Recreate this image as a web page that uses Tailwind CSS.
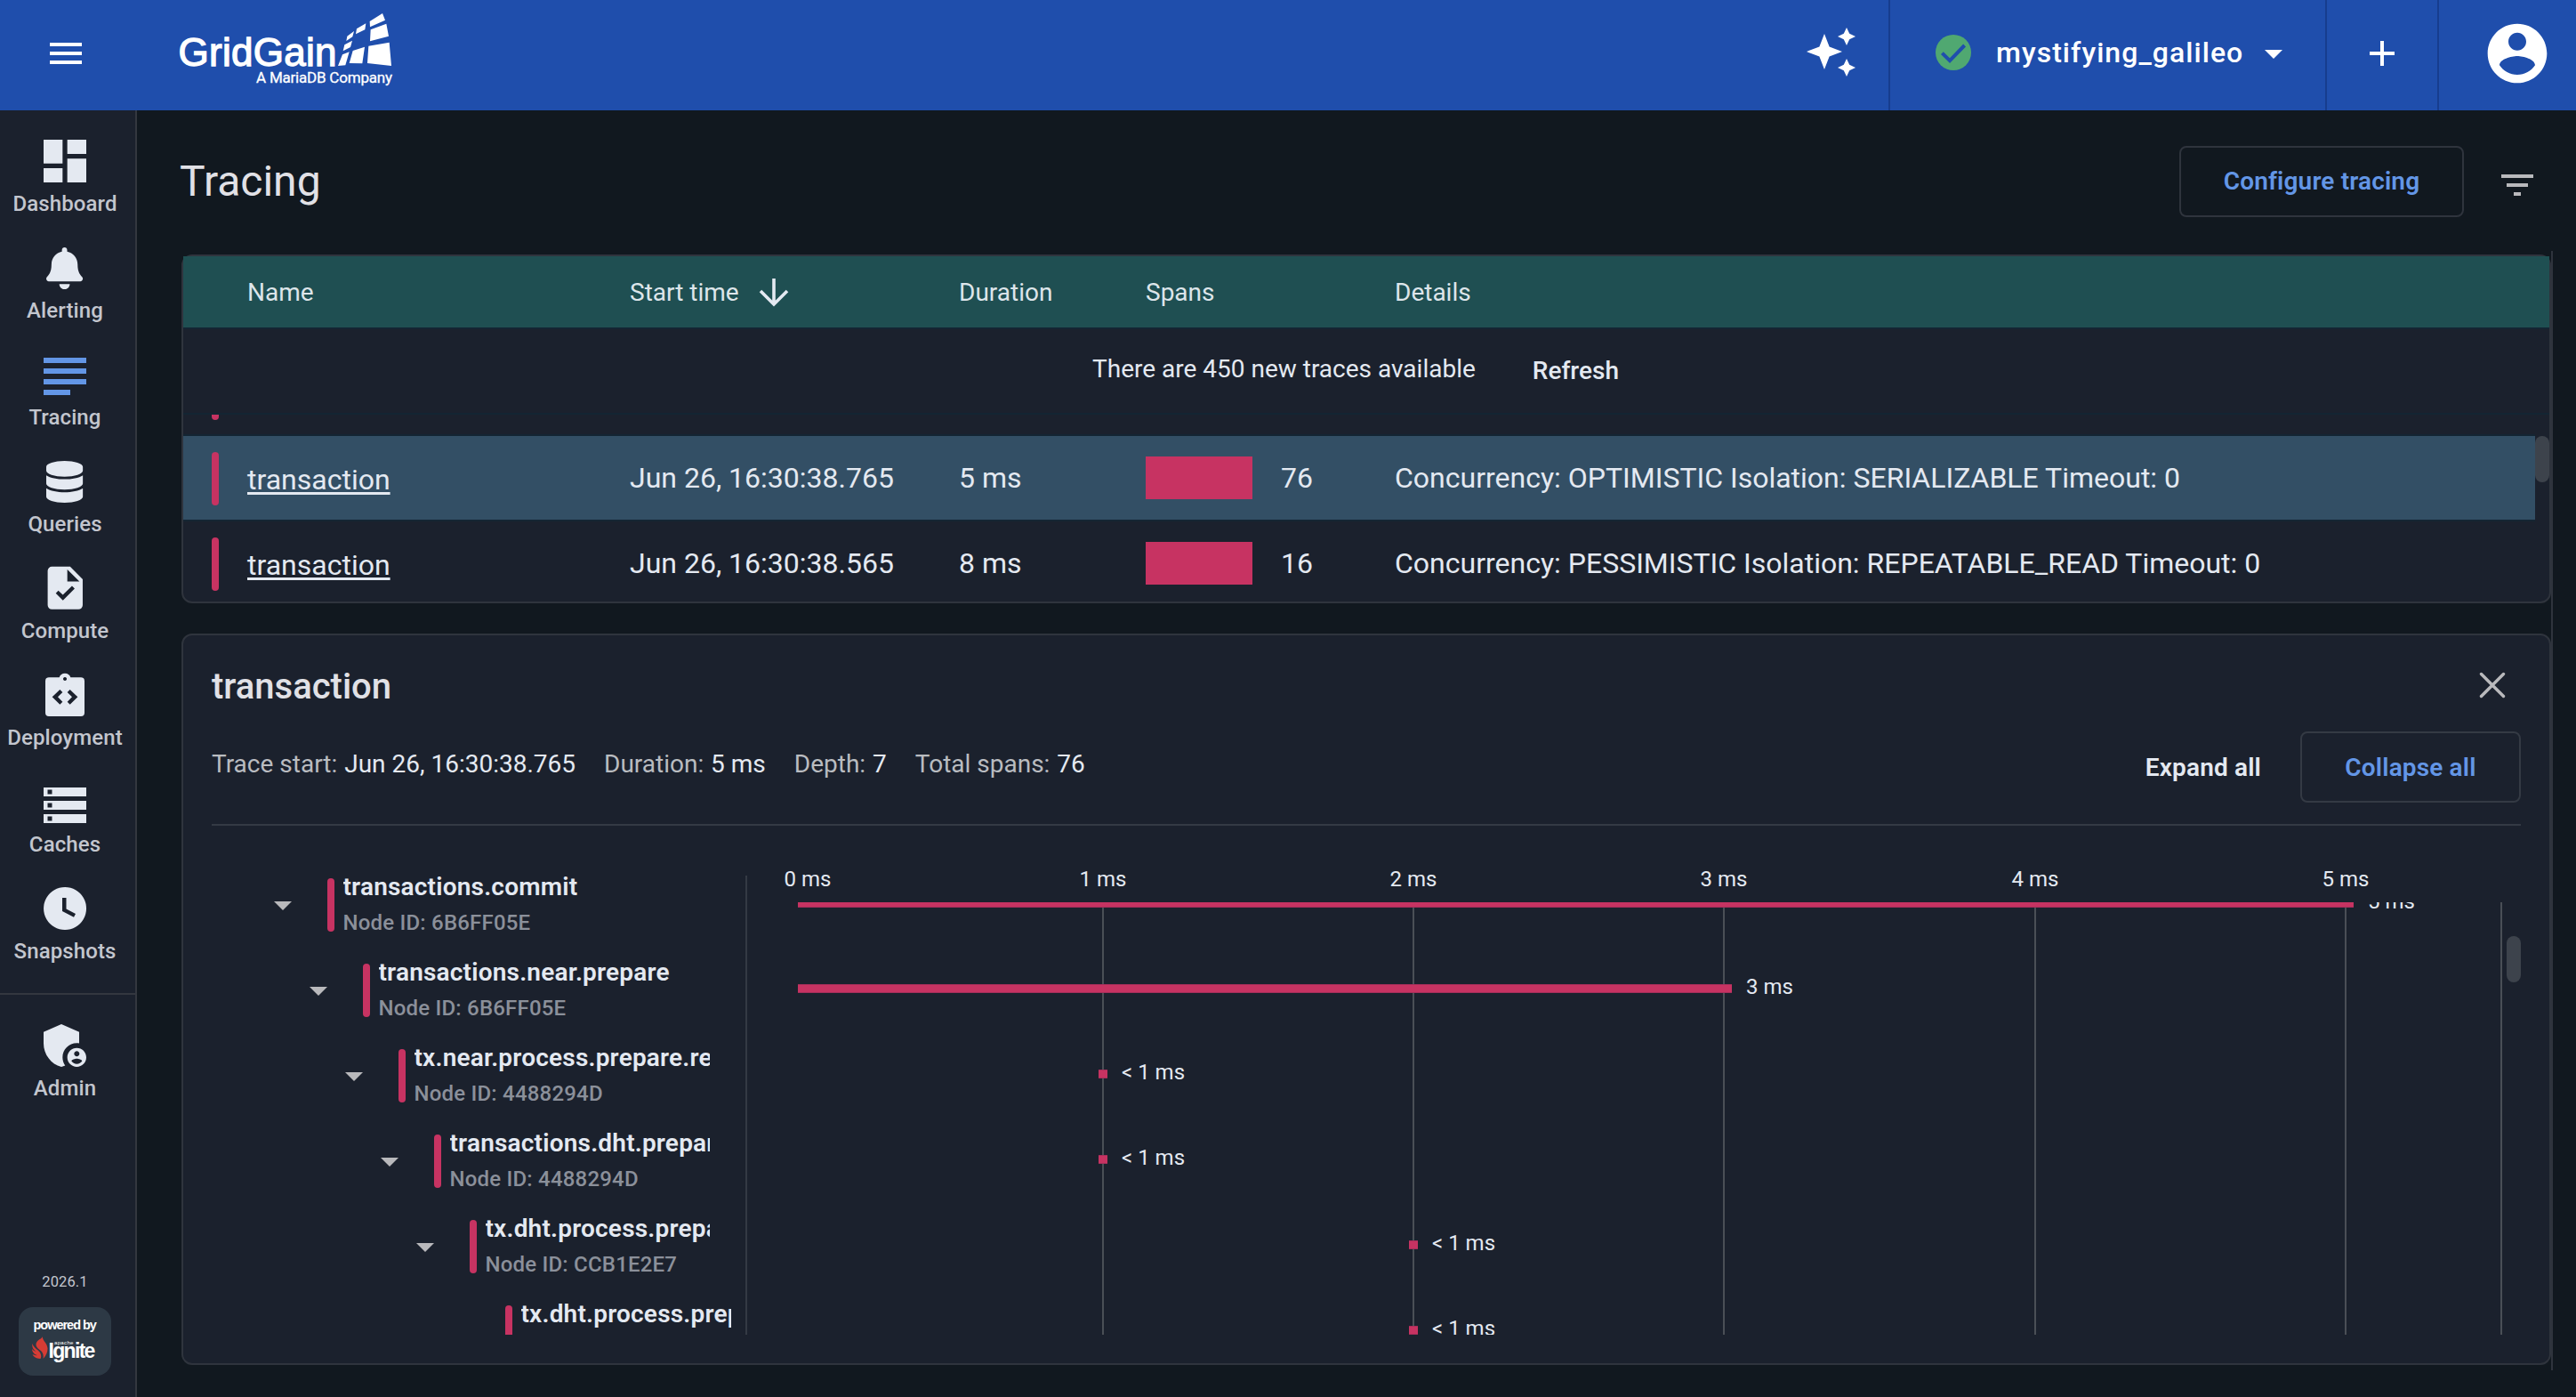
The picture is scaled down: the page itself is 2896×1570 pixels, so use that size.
<!DOCTYPE html>
<html lang="en">
<head>
    <meta charset="UTF-8">
    <meta name="viewport" content="width=device-width, initial-scale=1.0">
    <title>Tracing</title>
    <script src="https://cdn.jsdelivr.net/npm/@tailwindcss/browser@4"></script>
</head>
<body class="w-[2896px] h-[1570px] overflow-hidden flex flex-col bg-[#11181f] text-[#e4e9f1] font-['Roboto',sans-serif]">
    <!-- top bar -->
    <header class="h-[124px] shrink-0 flex items-stretch bg-[#1f4eac] text-white">
        <button class="pl-[50px] pb-1 flex items-center">
            <svg class="size-12" viewBox="0 0 24 24" fill="currentColor"><path d="M3 6h18v2H3zM3 11h18v2H3zM3 16h18v2H3z"/></svg>
        </button>
        <div class="ml-[102px] w-[244px]">
            <svg class="w-[244px] h-[124px]" viewBox="200 0 244 124" fill="#fff">
                <text x="200.5" y="74" font-family="Liberation Sans" font-size="44" textLength="178" stroke="#fff" stroke-width="1.3">GridGain</text>
                <text x="288" y="93" font-family="Roboto" font-size="17" textLength="153" stroke="#fff" stroke-width=".3">A MariaDB Company</text>
                <g transform="scale(.33333)">
                    <path d="M1247 72l43-27 9 23-51 23zM1250 100l53-20 8 42-63 17zM1243 155l70-12 7 79-81-9z"/>
                    <path d="M1203 97l31-18-3 21-31 15zM1190 171l40-13-8 56-44-1z"/>
                    <path d="M1171 122l23-17-5 19-21 14zM1162 151l26-14-6 22-25 13zM1155 184l23-9-13 45-25 2z"/>
                </g>
            </svg>
        </div>
        <div class="ml-auto w-[99px] flex items-center pl-[6px] pb-2">
            <svg class="size-16" viewBox="0 0 64 64" fill="currentColor">
                <path d="M21 12l5.600 14.400L41 32l-14.400 5.600L21 52l-5.600-14.400L1 32l14.400-5.600z"/>
                <path d="M46 5l3.200 6.800L56 15l-6.800 3.200L46 25l-3.200-6.800L36 15l6.800-3.200zM46 40l3.200 6.800L56 50l-6.800 3.200L46 60l-3.200-6.800L36 50l6.800-3.200z"/>
            </svg>
        </div>
        <div class="w-[491px] border-l-2 border-[#173d8e] pl-[47px] pb-1 flex items-center">
            <svg class="size-12 -mt-0.5" viewBox="0 0 24 24"><circle cx="12" cy="12" r="10" fill="#50a871"/><path d="M5.700 12.300l4.300 4.300L18.300 8" fill="none" stroke="#1f4eac" stroke-width="2"/></svg>
            <span class="ml-6 -mt-0.5 text-[32px] font-medium tracking-[1.05px]">mystifying_galileo</span>
            <svg class="size-12 ml-[10px]" viewBox="0 0 24 24" fill="currentColor"><path d="M7 10l5 5 5-5z"/></svg>
        </div>
        <div class="w-[126px] border-l-2 border-[#173d8e] pb-1 flex items-center justify-center">
            <svg class="size-12" viewBox="0 0 24 24" fill="currentColor"><path d="M19 13h-6v6h-2v-6H5v-2h6V5h2v6h6z"/></svg>
        </div>
        <div class="w-[156px] border-l-2 border-[#173d8e] pl-12 pb-1 flex items-center">
            <svg class="size-20" viewBox="0 0 24 24" fill="currentColor"><path d="M12 2C6.480 2 2 6.480 2 12s4.480 10 10 10 10-4.480 10-10S17.520 2 12 2zm0 3c1.660 0 3 1.340 3 3s-1.340 3-3 3-3-1.340-3-3 1.340-3 3-3zm0 14.200c-2.500 0-4.710-1.280-6-3.220.03-1.990 4-3.080 6-3.080 1.990 0 5.970 1.090 6 3.080-1.290 1.940-3.500 3.220-6 3.220z"/></svg>
        </div>
    </header>

    <div class="flex flex-1 min-h-0">
        <!-- side navigation -->
        <aside class="w-[154px] shrink-0 flex flex-col bg-[#1b212d] border-r-2 border-[#33373f] pr-[6px] text-[24px] font-medium tracking-[0.1px] text-[#c3c6ce]">
            <nav class="flex flex-col pt-[25px]">
                <a class="h-30 flex flex-col items-center">
                    <svg class="w-16 h-16" viewBox="0 0 24 24" fill="#e4e9f1"><path d="M3 13h8V3H3v10zm0 8h8v-6H3v6zm10 0h8V11h-8v10zm0-18v6h8V3h-8z"/></svg>
                    <span class="leading-8">Dashboard</span>
                </a>
                <a class="h-30 flex flex-col items-center">
                    <span class="h-16 flex items-center"><svg class="h-[47px]" viewBox="0 0 448 512" fill="#e4e9f1"><path d="M224 512c35.320 0 63.970-28.650 63.970-64H160.030c0 35.350 28.650 64 63.970 64zm215.390-149.710c-19.320-20.760-55.470-51.990-55.470-154.290 0-77.700-54.480-139.900-127.940-155.160V32c0-17.670-14.320-32-31.980-32s-31.980 14.330-31.980 32v20.840C118.560 68.100 64.080 130.300 64.080 208c0 102.300-36.150 133.530-55.470 154.290-6 6.450-8.660 14.160-8.610 21.710.11 16.400 12.980 32 32.100 32h383.800c19.120 0 32-15.600 32.100-32 .05-7.550-2.610-15.270-8.610-21.710z"/></svg></span>
                    <span class="leading-8">Alerting</span>
                </a>
                <a class="h-30 flex flex-col items-center">
                    <svg class="w-16 h-16" viewBox="0 0 64 64" fill="#6396e6"><path d="M8 13h48v6H8zM8 25h48v6H8zM8 37h48v6H8zM8 49h30v6H8z"/></svg>
                    <span class="leading-8">Tracing</span>
                </a>
                <a class="h-30 flex flex-col items-center">
                    <span class="h-16 flex items-center"><svg class="h-[47px]" viewBox="0 0 448 512" fill="#e4e9f1"><path d="M448 73.143v45.714C448 159.143 347.667 192 224 192S0 159.143 0 118.857V73.143C0 32.857 100.333 0 224 0s224 32.857 224 73.143zM448 176v102.857C448 319.143 347.667 352 224 352S0 319.143 0 278.857V176c48.125 33.143 136.208 48.572 224 48.572S399.874 209.143 448 176zm0 160v102.857C448 479.143 347.667 512 224 512S0 479.143 0 438.857V336c48.125 33.143 136.208 48.572 224 48.572S399.874 369.143 448 336z"/></svg></span>
                    <span class="leading-8">Queries</span>
                </a>
                <a class="h-30 flex flex-col items-center">
                    <span class="h-16 flex items-center"><svg class="size-[57.6px]" viewBox="0 0 24 24" fill="#e4e9f1" fill-rule="evenodd"><path d="M14.500 2H6a2 2 0 0 0-2 2v16a2 2 0 0 0 2 2h12.400a2 2 0 0 0 2-2V7.900zM13.200 9V3.300L18.900 9zM7.800 14.500L9 13.250l2.100 2L15.400 11l1.250 1.300-5.500 5.500z"/></svg></span>
                    <span class="leading-8">Compute</span>
                </a>
                <a class="h-30 flex flex-col items-center">
                    <svg class="w-16 h-16" viewBox="123 27 192 192" fill="#e4e9f1" fill-rule="evenodd"><path d="M165 64h35a20 20 0 0 1 38 0h35q12 0 12 12v107q0 12-12 12H165q-12 0-12-12V76q0-12 12-12zM219 63a6 6 0 1 0 .1 0zM176 130l26-25 9 9-16 16 16 16-9 9zM262 130l-26-25-9 9 16 16-16 16 9 9z"/></svg>
                    <span class="leading-8">Deployment</span>
                </a>
                <a class="h-30 flex flex-col items-center">
                    <svg class="w-16 h-16" viewBox="0 0 64 64" fill="#e4e9f1" fill-rule="evenodd"><path d="M8 16h48v10H8zM12.500 18.500v5h5v-5zM8 31h48v10H8zM12.500 33.500v5h5v-5zM8 46h48v10H8zM12.500 48.500v5h5v-5z"/></svg>
                    <span class="leading-8">Caches</span>
                </a>
                <a class="h-30 flex flex-col items-center">
                    <svg class="w-16 h-16" viewBox="0 0 64 64" fill="#e4e9f1" fill-rule="evenodd"><path d="M32 8a24 24 0 1 0 .1 0zM29 20h4.500v12.500L44 38l-2 3.800L29 35z"/></svg>
                    <span class="leading-8">Snapshots</span>
                </a>
            </nav>
            <div class="h-0.5 w-[152px] mt-[7px] bg-[#33373f]"></div>
            <a class="mt-[25px] flex flex-col items-center">
                <svg class="w-16 h-16" viewBox="0 0 24 24" fill="#e4e9f1"><path d="M17 11c.34 0 .67.04 1 .09V6.270L10.500 3 3 6.270v4.910c0 4.540 3.200 8.790 7.500 9.820.55-.13 1.080-.32 1.600-.55-.69-.98-1.100-2.170-1.100-3.450 0-3.310 2.690-6 6-6z"/><path d="M17 13c-2.210 0-4 1.790-4 4s1.790 4 4 4 4-1.790 4-4-1.790-4-4-4zm0 1.380c.62 0 1.120.51 1.120 1.120s-.51 1.120-1.120 1.120-1.120-.51-1.120-1.120.5-1.120 1.120-1.120zm0 5.370c-.93 0-1.740-.46-2.240-1.170.05-.72 1.510-1.080 2.240-1.080s2.190.36 2.240 1.080c-.5.71-1.310 1.170-2.240 1.170z"/></svg>
                <span class="leading-8">Admin</span>
            </a>
            <div class="mt-auto mb-6 flex flex-col items-center">
                <span class="text-[16.5px] leading-5 font-normal">2026.1</span>
                <div class="mt-[18px] -ml-px w-[104px] h-[77px] rounded-2xl bg-[#2d3945]">
                    <svg class="w-[104px] h-[77px]" viewBox="21 1469 104 77" fill="#fff">
                        <text x="37.500" y="1494" font-family="Liberation Sans" font-size="14.500" font-weight="700" textLength="71.500">powered by</text>
                        <path fill="#d63c35" d="M48 1502c-1 4 5 7 5.500 13 .3 5-2 9-5 12 1-5-1-8-4-10-4-3-5-6-3-9 2-3 5-3 6.500-6zM36.500 1510c1 5 6 6 8.500 10 1.500 3 1.500 5 .5 7-4 0-8-2-9-5 2 1 4 1.500 5 1-3-1-5.500-4-5.500-7 1.500 2 3 2.500 4.500 3-3-2-5-5-4-9z"/>
                        <text x="61" y="1510.500" font-family="Liberation Sans" font-size="6" textLength="21.500">apache</text>
                        <text x="54.500" y="1526" font-family="Liberation Sans" font-size="23" font-weight="700" textLength="53">Ignite</text>
                    </svg>
                </div>
            </div>
        </aside>

        <main class="flex-1 flex flex-col pl-12">
            <div class="mt-10 h-20 pr-[42px] flex items-center">
                <h1 class="text-[48px] leading-[56px] text-[#e1e1e6]">Tracing</h1>
                <button class="ml-auto h-20 w-[320px] border-2 border-[#2f343d] rounded-lg text-[28px] font-semibold tracking-[0.15px] text-[#6396e6]">Configure tracing</button>
                <svg class="size-12 ml-9 mt-2" viewBox="0 0 24 24" fill="#b9b9bc"><path d="M10 18h4v-2h-4v2zM3 6v2h18V6H3zm3 7h12v-2H6v2z"/></svg>
            </div>

            <div class="ml-0.5 mr-[26px] mt-[38px] h-[1258px] pt-1 border-r-2 border-[#2f343d] flex flex-col gap-[34px]">
                <!-- trace list -->
                <section class="h-[392px] border-2 border-[#2f343d] rounded-xl bg-[#1b212d]">
                    <div class="h-[82px] pt-0.5 border-b-2 border-[#142533] bg-[#1f4f52] grid grid-cols-[71px_431px_370px_210px_280px_1fr] items-center text-[28px] text-[#dde5ea]">
                        <span></span>
                        <span class="pl-px">Name</span>
                        <span class="flex items-center gap-[17px]">Start time
                            <svg class="size-[44px]" viewBox="0 0 44 44" fill="none" stroke="#e4e9f1" stroke-width="3.600"><path d="M22 6v29M7 20l15 15 15-15"/></svg>
                        </span>
                        <span>Duration</span>
                        <span>Spans</span>
                        <span>Details</span>
                    </div>
                    <div class="h-24 border-b-2 border-[#142533] flex items-center justify-center text-[28px]">
                        <span class="pb-[5px]">There are 450 new traces available</span>
                        <button class="ml-10 px-6 font-medium">Refresh</button>
                    </div>
                    <div class="relative h-[210px] overflow-hidden rounded-b-[10px] pr-4 text-[32px]">
                        <div class="h-6 border-b-2 border-[#142533] pl-8">
                            <div class="w-2 h-1.5 rounded-b bg-[#c73362]"></div>
                        </div>
                        <div class="h-24 border-b-2 border-[#142533] bg-[#334f65] grid grid-cols-[71px_431px_370px_210px_280px_1fr] items-center">
                            <span class="ml-8 mt-0.5 w-2 h-15 rounded bg-[#c73362]"></span>
                            <a class="pl-px pt-1 underline underline-offset-[3px] decoration-[3px] [text-decoration-skip-ink:none]">transaction</a>
                            <span>Jun 26, 16:30:38.765</span>
                            <span>5 ms</span>
                            <span class="flex items-center gap-8"><i class="w-30 h-12 bg-[#c73362]"></i>76</span>
                            <span>Concurrency: OPTIMISTIC Isolation: SERIALIZABLE Timeout: 0</span>
                        </div>
                        <div class="h-24 grid grid-cols-[71px_431px_370px_210px_280px_1fr] items-center pb-0.5">
                            <span class="ml-8 mt-0.5 w-2 h-15 rounded bg-[#c73362]"></span>
                            <a class="pl-px pt-1 underline underline-offset-[3px] decoration-[3px] [text-decoration-skip-ink:none]">transaction</a>
                            <span>Jun 26, 16:30:38.565</span>
                            <span>8 ms</span>
                            <span class="flex items-center gap-8"><i class="w-30 h-12 bg-[#c73362]"></i>16</span>
                            <span>Concurrency: PESSIMISTIC Isolation: REPEATABLE_READ Timeout: 0</span>
                        </div>
                        <div class="absolute right-0 top-6 w-4 h-[52px] rounded-full bg-[#3d434c]"></div>
                    </div>
                </section>

                <!-- selected trace -->
                <section class="h-[822px] border-2 border-[#2f343d] rounded-xl bg-[#1b212d] px-8 pt-8 flex flex-col">
                    <div class="h-12 flex items-center justify-between">
                        <h2 class="pt-[3px] text-[40px] leading-[48px] font-medium text-[#e1e1e6]">transaction</h2>
                        <svg class="size-12 mr-2" viewBox="0 0 48 48" fill="none" stroke="#b9b9bc" stroke-width="3.400" stroke-linecap="round"><path d="M11.500 11.500l25 25M36.500 11.500l-25 25"/></svg>
                    </div>
                    <div class="mt-7 h-20 flex items-center">
                        <div class="pb-[7px] flex gap-8 text-[28px] text-[#b9bcc0]">
                            <span>Trace start: <b class="ml-px font-normal text-[#e4e9f1]">Jun 26, 16:30:38.765</b></span>
                            <span>Duration: <b class="ml-px font-normal text-[#e4e9f1]">5 ms</b></span>
                            <span>Depth: <b class="ml-px font-normal text-[#e4e9f1]">7</b></span>
                            <span>Total spans: <b class="ml-px font-normal text-[#e4e9f1]">76</b></span>
                        </div>
                        <button class="ml-auto pt-px text-[28px] font-semibold tracking-[0.15px]">Expand all</button>
                        <button class="ml-11 h-20 w-[248px] pt-px border-2 border-[#343a44] rounded-lg text-[28px] font-semibold tracking-[0.15px] text-[#6396e6]">Collapse all</button>
                    </div>
                    <div class="mt-6 h-0.5 shrink-0 bg-[#343a44]"></div>

                    <div class="flex h-[572px]">
                        <!-- span tree -->
                        <div id="tree" class="w-[602px] mt-14 h-[516px] shrink-0 overflow-hidden border-r-2 border-[#343a44]"></div>
                        <!-- timeline -->
                        <div class="flex-1">
                            <div id="axis" class="relative h-[86px] text-[24px] leading-6"></div>
                            <div class="relative h-[486px] overflow-hidden">
                                <div id="lines"></div>
                                <div id="bars" class="relative -mt-[47px] text-[24px]"></div>
                                <div class="absolute right-0 top-[38px] w-4 h-[52px] rounded-full bg-[#3d434c]"></div>
                            </div>
                        </div>
                    </div>
                </section>
            </div>
        </main>
    </div>

    <script>
        // left / width are px inside the timeline
        const spans = [
            { name: 'transactions.commit', node: '6B6FF05E', left: 57, width: 1749, time: '5 ms' },
            { name: 'transactions.near.prepare', node: '6B6FF05E', left: 57, width: 1050, time: '3 ms' },
            { name: 'tx.near.process.prepare.request', node: '4488294D', left: 395, width: 10, time: '&lt; 1 ms' },
            { name: 'transactions.dht.prepare', node: '4488294D', left: 395, width: 10, time: '&lt; 1 ms' },
            { name: 'tx.dht.process.prepare.request', node: 'CCB1E2E7', left: 744, width: 10, time: '&lt; 1 ms' },
            { name: 'tx.dht.process.prepare.response', node: '4488294D', left: 744, width: 10, time: '&lt; 1 ms', leaf: true },
        ];
        const ticks = [68, 400, 749, 1098, 1448, 1797];

        document.getElementById('tree').innerHTML = spans.map((s, i) => `
            <div class="h-24 flex items-start" style="padding-left:${56 + i * 40}px; width:${s.leaf ? 584 : 560}px">
                <svg class="size-12 shrink-0 mt-[9px]" viewBox="0 0 24 24" fill="#b9b9bc">${s.leaf ? '' : '<path d="M7 10l5 5 5-5z"/>'}</svg>
                <div class="ml-[26px] mt-[3px] w-2 h-15 shrink-0 rounded bg-[#c73362]"></div>
                <div class="ml-[9.5px] mt-px flex-1 min-w-0 overflow-x-clip whitespace-nowrap font-semibold tracking-[0.2px]">
                    <div class="text-[28px] leading-6">${s.name}</div>
                    <div class="mt-4 text-[24px] leading-6 font-medium text-[#8b909a]">Node ID: ${s.node}</div>
                </div>
            </div>`).join('');

        document.getElementById('axis').innerHTML = ticks.map((x, i) =>
            `<span class="absolute bottom-[14px] -translate-x-1/2 whitespace-nowrap" style="left:${x}px">${i} ms</span>`).join('');

        document.getElementById('lines').innerHTML = [...ticks.slice(1), 1972].map(x =>
            `<div class="absolute inset-y-0 w-0.5 bg-[#4a4f56]" style="left:${x - 1}px"></div>`).join('');

        document.getElementById('bars').innerHTML = spans.map(s => `
            <div class="h-24 flex items-center" style="padding-left:${s.left}px">
                <div class="h-2.5 border-y border-[#a52e5a] bg-[#c73362]" style="width:${s.width}px"></div>
                <span class="ml-4 pb-[5px]">${s.time}</span>
            </div>`).join('');
    </script>
</body>
</html>
